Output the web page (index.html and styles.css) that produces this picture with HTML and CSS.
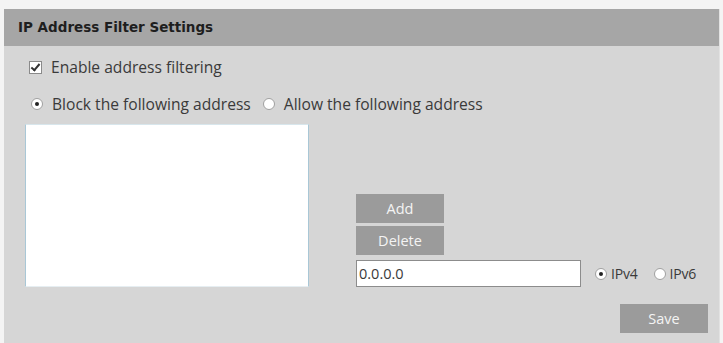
FILE: index.html
```html
<!DOCTYPE html>
<html>
<head>
    <meta charset="utf-8">
    <title>IP Address Filter Settings</title>
    <link rel="stylesheet" href="styles.css">
</head>
<body>
    <div class="panel">
        <div class="panel-title">IP Address Filter Settings</div>
        <div class="panel-body">
            <div class="option-row">
                <span class="check checked"></span>
                <span class="label">Enable address filtering</span>
            </div>

            <div class="option-row mode-row">
                <span class="radio selected"></span>
                <span class="label">Block the following address</span>
                <span class="radio"></span>
                <span class="label">Allow the following address</span>
            </div>

            <div class="filter-area">
                <div class="address-list"></div>
                <div class="address-tools">
                    <button class="btn">Add</button>
                    <button class="btn">Delete</button>
                    <div class="address-input-row">
                        <input class="address-input" type="text" value="0.0.0.0">
                        <span class="radio selected"></span>
                        <span class="ip-label">IPv4</span>
                        <span class="radio"></span>
                        <span class="ip-label">IPv6</span>
                    </div>
                </div>
            </div>

            <div class="save-row">
                <button class="btn save">Save</button>
            </div>
        </div>
    </div>
</body>
</html>
```

FILE: styles.css
```css
body {
    margin: 0;
    background: #f4f4f4;
    overflow: hidden;
    font-family: "Open Sans", "Noto Sans", sans-serif;
    color: #3a3a3a;
}

.panel {
    margin: 9px 3px 0 4px;
    height: 334px;
    background: #d6d6d6;
    border-right: 1px solid #e2e2e2;
}

.panel-title {
    height: 37px;
    line-height: 37px;
    padding-left: 14px;
    background: #a6a6a6;
    font-family: "DejaVu Sans", sans-serif;
    font-weight: bold;
    font-size: 13.5px;
    color: #1e1e1e;
}

.panel-body {
    padding: 12px 11px 0 21px;
}

.option-row {
    display: flex;
    align-items: center;
    height: 18px;
    padding-left: 4px;
    font-size: 15.6px;
}

.mode-row {
    margin-top: 19px;
    padding-left: 6px;
}

.label {
    margin: 0 12px 0 9px;
}

.check {
    width: 11px;
    height: 11px;
    border: 1px solid #8a8a8a;
    background: #fff;
    position: relative;
}

.check.checked::after {
    content: "";
    position: absolute;
    left: 3px;
    top: 0px;
    width: 3px;
    height: 7px;
    border: solid #333;
    border-width: 0 2px 2px 0;
    transform: rotate(40deg);
}

.radio {
    width: 10px;
    height: 10px;
    border: 1px solid #a0a0a0;
    border-radius: 50%;
    background: #fff;
    display: flex;
    align-items: center;
    justify-content: center;
    flex-shrink: 0;
}

.radio.selected::after {
    content: "";
    width: 4px;
    height: 4px;
    border-radius: 50%;
    background: #222;
}

.filter-area {
    display: flex;
    align-items: flex-end;
    margin-top: 11px;
}

.address-list {
    flex-shrink: 0;
    width: 282px;
    height: 161px;
    background: #fff;
    border: 1px solid #a9c7d6;
    border-top-color: #d8e6ec;
    border-bottom-color: #e6eef2;
}

.address-tools {
    margin-left: 47px;
    display: flex;
    flex-direction: column;
    align-items: flex-start;
}

.btn {
    width: 88px;
    height: 29px;
    border: none;
    background: #9b9b9b;
    color: #f4f4f4;
    font-family: "Open Sans", sans-serif;
    font-size: 14.5px;
    padding: 0;
    margin-bottom: 3px;
}

.address-input-row {
    display: flex;
    align-items: center;
    margin-top: 2px;
}

.address-input {
    flex-shrink: 0;
    width: 225px;
    height: 27px;
    box-sizing: border-box;
    border: 1px solid #8c8c8c;
    padding: 0 2px;
    font-family: "Open Sans", sans-serif;
    font-size: 14.5px;
    color: #3a3a3a;
    margin-right: 14px;
}

.ip-label {
    font-size: 14px;
    margin: 0 16px 0 4px;
    letter-spacing: -0.2px;
    white-space: nowrap;
}

.ip-label:last-child {
    margin-right: 0;
}

.save-row {
    display: flex;
    justify-content: flex-end;
    margin-top: 17px;
}

.save {
    margin-bottom: 0;
}
```
